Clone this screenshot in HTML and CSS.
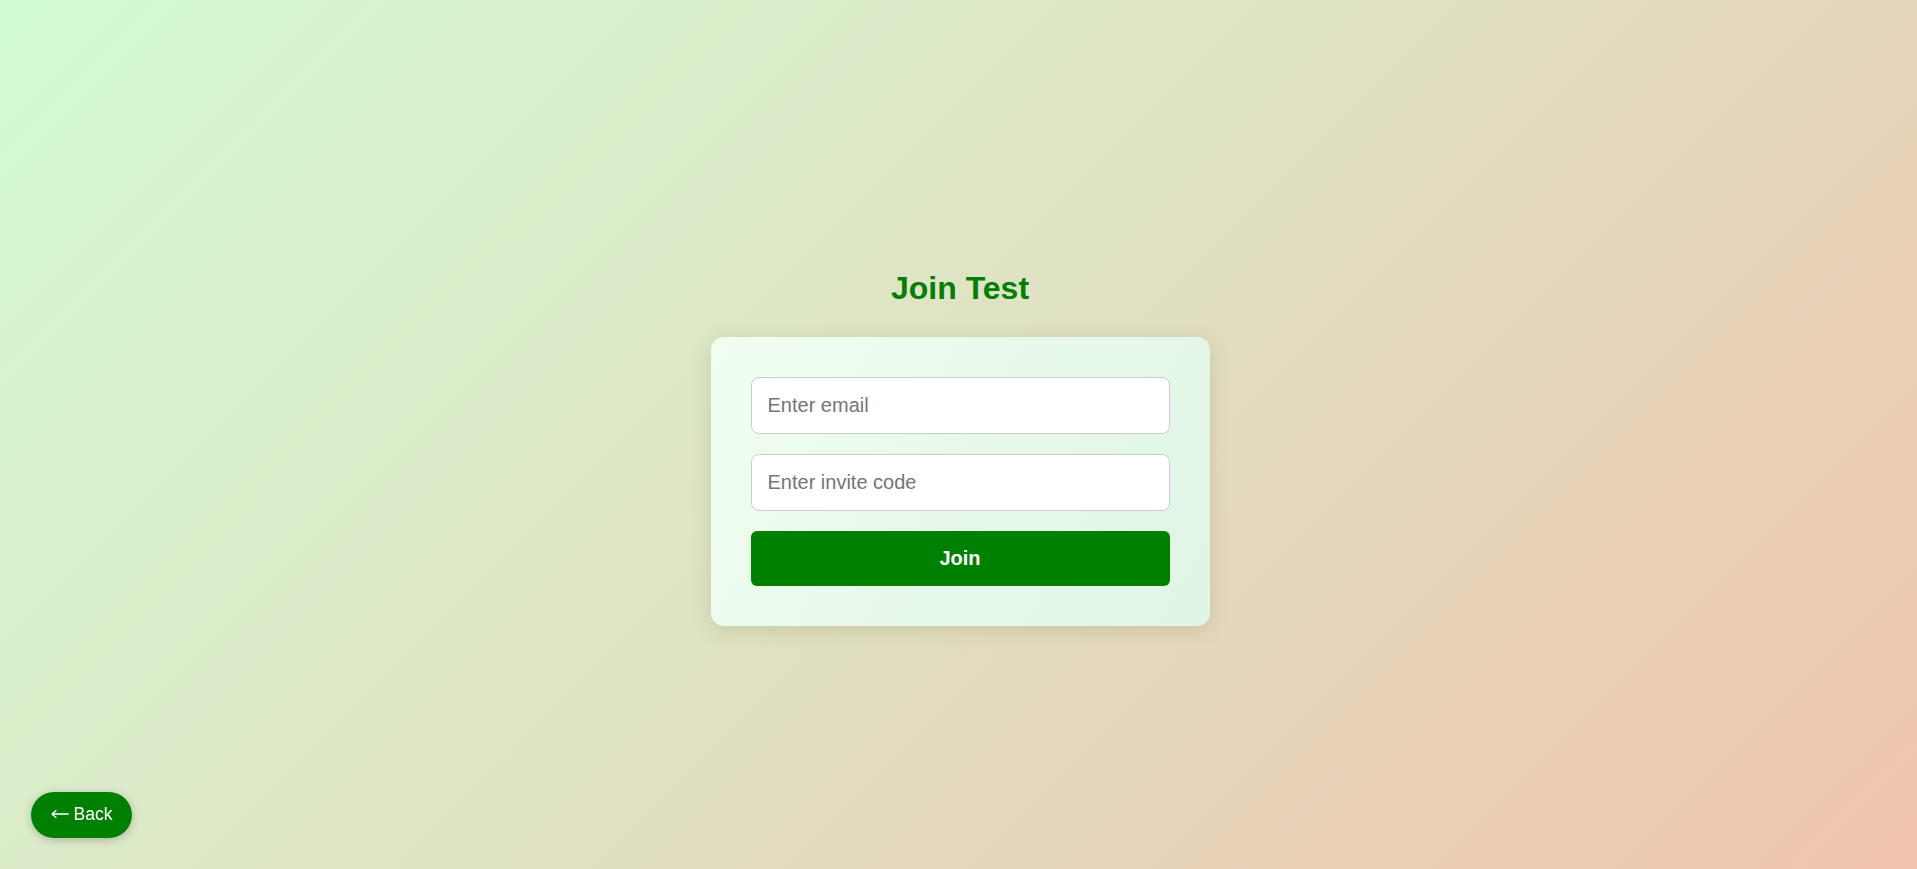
FILE: index.html
```html
<!DOCTYPE html>
<html lang="en">
<head>
<meta charset="utf-8">
<title>Join Test</title>
<link rel="stylesheet" href="styles.css">
</head>
<body>
<main class="page">
  <h1 class="title">Join Test</h1>
  <form class="card" onsubmit="return false;">
    <input class="field" type="email" placeholder="Enter email">
    <input class="field" type="text" placeholder="Enter invite code">
    <button class="join-btn" type="submit">Join</button>
  </form>
</main>
<button class="back-btn" type="button" aria-label="← Back"><svg class="back-arrow" width="18" height="10" viewBox="0 0 18 10" aria-hidden="true"><path d="M0.8 5 H17.6 M0.8 5 L5.4 1.2 M0.8 5 L5.4 8.8" fill="none" stroke="#ffffff" stroke-width="1.3" stroke-linecap="butt"/></svg><span class="back-label">Back</span></button>
</body>
</html>
```

FILE: styles.css
```css
html, body {
  margin: 0;
  padding: 0;
  height: 100%;
}

body {
  font-family: "Liberation Sans", Arial, sans-serif;
  background: linear-gradient(135deg, #d3fcd3 0%, #e0e1c3 50%, #f0c3ae 100%);
  overflow: hidden;
}

.page {
  box-sizing: border-box;
  height: 100vh;
  padding-left: 3px;
  display: flex;
  flex-direction: column;
  align-items: center;
  justify-content: center;
}

.title {
  margin: 27px 0 30.5px;
  font-size: 32px;
  font-weight: bold;
  color: #008000;
  line-height: normal;
}

.card {
  width: 419px;
  padding: 40px;
  border-radius: 13px;
  background: linear-gradient(120deg, #f1fff0 0%, #e7f8e9 50%, #dff5e6 100%);
  box-shadow: 0 4px 20px rgba(90, 90, 40, 0.18);
  display: flex;
  flex-direction: column;
}

.field {
  box-sizing: border-box;
  width: 100%;
  padding: 16px 16px;
  margin: 0 0 20px;
  font-family: inherit;
  font-size: 20px;
  line-height: normal;
  border: 1px solid #cccccc;
  border-radius: 8px;
  background: #ffffff;
  color: #222;
  outline: none;
}

.field::placeholder {
  color: #757575;
}

.join-btn {
  width: 100%;
  padding: 16px;
  border: none;
  border-radius: 6px;
  background: #008000;
  color: #ffffff;
  font-family: inherit;
  font-size: 20px;
  font-weight: bold;
  line-height: normal;
  cursor: pointer;
}

.back-btn {
  position: fixed;
  left: 31px;
  bottom: 31px;
  padding: 12.6px 19.5px 12.6px 20px;
  border: none;
  border-radius: 999px;
  background: #008000;
  color: #ffffff;
  font-family: inherit;
  font-size: 17.6px;
  line-height: normal;
  box-shadow: 0 2px 8px rgba(0, 0, 0, 0.22);
  cursor: pointer;
}

.back-arrow {
  display: inline-block;
  vertical-align: 1px;
  margin-right: 4.5px;
}
```
